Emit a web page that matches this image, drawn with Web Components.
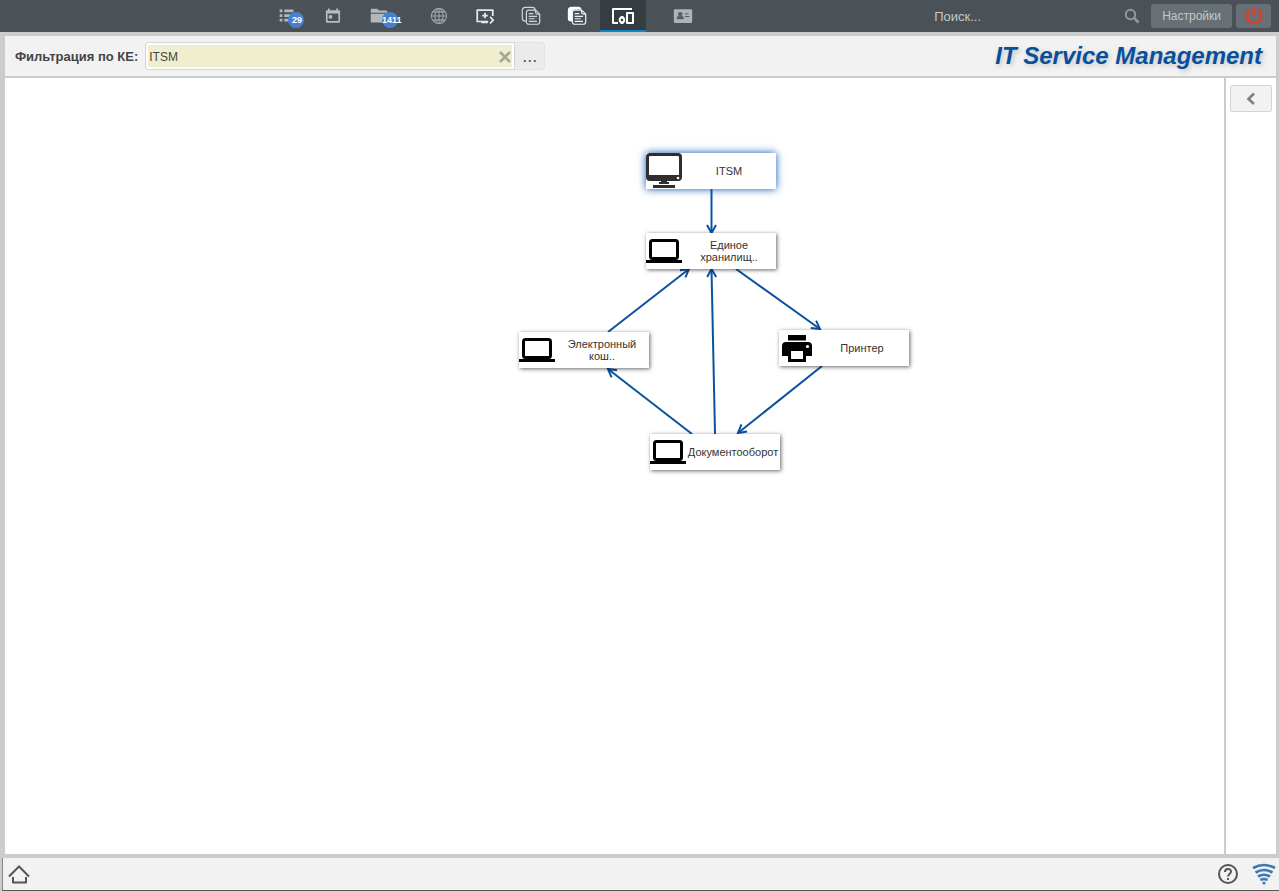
<!DOCTYPE html>
<html lang="ru">
<head>
<meta charset="utf-8">
<title>IT Service Management</title>
<style>
html, body { margin: 0; height: 100%; }
body { font: 13px/16px "Liberation Sans", Arial, sans-serif; color: #444; background: #ccc; }
</style>
</head>
<body>
<itsm-app></itsm-app>
<script>
const ICONS = {
  list: '<g fill="#b4b8ba"><path d="M4 5h3v3H4zM4 10h3v3H4zM4 15h3v3H4zM9 5h10v3H9zM9 10h10v3H9zM9 15h6v3H9z"/></g>',
  calendar: '<path fill="#b9bcbe" fill-rule="evenodd" d="M6 3h2v2h8V3h2v2h1a1.500 1.500 0 0 1 1.500 1.500v12a1.500 1.500 0 0 1-1.500 1.500H5a1.500 1.500 0 0 1-1.500-1.500v-12A1.500 1.500 0 0 1 5 5h1zM5.500 9v9h13V9zM7 11h4v4H7z"/>',
  folder: '<path fill="#b4b8ba" d="M4 4h6l2 2h8a1 1 0 0 1 1 1v1.500H3V5a1 1 0 0 1 1-1zM3 9.500h18V19H3z"/>',
  globe: '<g fill="none" stroke="#a5a9ab" stroke-width="1.100"><circle cx="12" cy="12" r="8.300"/><ellipse cx="12" cy="12" rx="4.500" ry="8.300"/><path d="M12 4v16M4 12h16M5.500 7.500h13M5.500 16.500h13"/></g>',
  monitor: '<path fill="none" stroke="#e8e9ea" stroke-width="1.900" stroke-linejoin="round" d="M20.500 12V5.500h-17v12.500h12M12 8.500v6M9 11.500h6M8 19h7M17.500 13l3.500 3.500-3.500 3.500"/>',
  docs: '<g fill="none" stroke="#d4d7d8" stroke-width="1.300"><path d="M7 17.500H5.500A3 3 0 0 1 2.500 14.500V6a3.500 3.500 0 0 1 3.500-3.500h7.500a3 3 0 0 1 3 3"/><path d="M9.500 5.500h7.500l4.500 4.500v8.500a2.500 2.500 0 0 1-2.500 2.500H9.500A2.500 2.500 0 0 1 7 18.500V8a2.500 2.500 0 0 1 2.500-2.500zM17 5.500v2.500a2 2 0 0 0 2 2h2.500M9.500 9.500h5M9.500 12.500h9M9.500 15h6.500M9.500 17.800h9"/></g>',
  docsfill: '<path fill="#fff" d="M6 2h7.500a3.500 3.500 0 0 1 3.500 3H9.500a3 3 0 0 0-3 3v10H5.500a3.500 3.500 0 0 1-3.500-3.500V6a4 4 0 0 1 4-4z"/><path fill="none" stroke="#f4f4f4" stroke-width="1.300" d="M9.500 5.500h7.500l4.500 4.500v8.500a2.500 2.500 0 0 1-2.500 2.500H9.500A2.500 2.500 0 0 1 7 18.500V8a2.500 2.500 0 0 1 2.500-2.500zM17 5.500v2.500a2 2 0 0 0 2 2h2.500M9.500 9.500h5M9.500 12.500h9M9.500 15h6.500M9.500 17.800h9"/>',
  devices: '<g fill="none" stroke="#fff" stroke-width="2" stroke-linejoin="round"><path d="M21 5H2v14h5"/><rect x="16" y="9" width="6" height="10"/><circle cx="11" cy="16" r="2.300"/></g><path fill="#fff" d="M9.500 12h3v2h-3zM9.500 18h3v2h-3z"/>',
  card: '<rect x="2" y="4.500" width="20" height="15" rx="1.200" fill="#b0b4b6"/><path fill="#596166" d="M9 7.500a2.500 2.500 0 0 1 1.700 4.300c1.300.8 2.300 1 2.300 3.700H5c0-2.700 1-2.900 2.300-3.700A2.500 2.500 0 0 1 9 7.500zM14 9h4v1.200h-4zM14 12h5v1.200h-5z"/>',
  search: '<g fill="none" stroke="#91979a"><circle cx="10.500" cy="10.500" r="4.700" stroke-width="2"/><path stroke-width="2.600" d="M14 14l4.500 4.500"/></g>',
  power: '<g fill="none" stroke="#d4422e" stroke-width="3"><path d="M8 6a7 7 0 1 0 8 0"/><path d="M12 3v9"/></g>',
  clear: '<path stroke="#a6a698" stroke-width="2.600" d="M7 7l10 10M17 7L7 17"/>',
  left: '<path fill="none" stroke="#808080" stroke-width="2.600" d="M15 6.500L9.500 12l5.500 5"/>',
  home: '<g fill="none" stroke="#555" stroke-width="2"><path d="M2 14.500L12 4.500l10 10"/><path d="M6 15v5.500h13V15" stroke-linejoin="round"/></g>',
  help: '<circle cx="12" cy="12" r="9" fill="none" stroke="#555" stroke-width="2"/><path fill="none" stroke="#555" stroke-width="2" d="M9 10c0-4 6-4 6-.5 0 2.300-3 2.500-3 5M12 16v2"/>',
  wifi: '<g fill="none" stroke="#3e78b0" stroke-width="2.700"><path d="M1 6q11-6 22 0M3.500 10.500q8.500-5 17 0M6 14.500q6-3.500 12 0M8.500 18q3.500-2 7 0"/></g><circle cx="12" cy="21" r="1.600" fill="#3e78b0"/>',
  desktop: '<rect x="1.500" y="1.500" width="33" height="25" rx="2.500" fill="#fff" stroke="#302d2f" stroke-width="3"/><path fill="#302d2f" d="M1 22h34v5H1zM15 27h6v2h2v2h-10v-2h2zM7 32h22v3H7z"/><circle cx="32" cy="25" r="1.300" fill="#fff"/>',
  laptop: '<rect x="4.500" y="7.500" width="27" height="18" rx="2" fill="none" stroke="#000" stroke-width="3"/><path d="M0 27h36v3H0z"/>',
  printer: '<path fill-rule="evenodd" d="M9 5h18v5.500H9zM7 12h22a4 4 0 0 1 4 4v10h-6v6H9v-6H3V16a4 4 0 0 1 4-4zM12 21v8h12v-8z"/><circle cx="28.500" cy="16.500" r="1.600" fill="#fff"/>'
};

function define(name, css, html) {
  customElements.define(name, class extends HTMLElement {
    constructor() {
      super();
      const t = document.createElement('template');
      t.innerHTML = `<style>*{box-sizing:border-box}${css}</style>${html}`;
      this.attachShadow({ mode: 'open' }).append(t.content.cloneNode(true));
    }
  });
}

class UiIcon extends HTMLElement {
  connectedCallback() {
    if (this.shadowRoot) return;
    const box = this.getAttribute('box') || 24;
    const size = this.getAttribute('size') || box;
    this.attachShadow({ mode: 'open' }).innerHTML =
      `<style>:host{display:block;flex:none}svg{display:block}</style>
       <svg width="${size}" height="${size}" viewBox="0 0 ${box} ${box}" aria-hidden="true">${ICONS[this.getAttribute('name')]}</svg>`;
  }
}
customElements.define('ui-icon', UiIcon);

class NavItem extends HTMLElement {
  connectedCallback() {
    if (this.shadowRoot) return;
    const badge = this.getAttribute('badge');
    this.attachShadow({ mode: 'open' }).innerHTML = `<style>
      :host{display:block;width:46px;height:32px}
      a{display:flex;box-sizing:border-box;width:100%;height:100%;align-items:center;justify-content:center;position:relative}
      :host([active]) a{background:#353d42;border-bottom:2px solid #1584ca;padding-top:2px}
      .badge{position:absolute;left:24px;top:12px;width:18px;height:16px;color:#fff;font:bold 9px/16px "Liberation Sans",sans-serif}
      .badge::before{content:"";position:absolute;left:0;top:0;width:16px;height:16px;border-radius:50%;background:#4a7fd0}
      .badge span{position:relative;display:block;text-align:center}
      .badge.long{left:26px;width:20px}
      .long span{text-align:left}
      </style><a href="#" aria-label="${this.getAttribute('label')}"><ui-icon name="${this.getAttribute('icon')}" size="${this.getAttribute('size') || 22}"></ui-icon>${
      badge ? `<span class="badge ${badge.length > 2 ? 'long' : ''}"><span>${badge}</span></span>` : ''}</a>`;
  }
}
customElements.define('nav-item', NavItem);

define('top-bar', `
  :host{display:flex;height:32px;background:#4a5257;align-items:center;padding-right:8px}
  nav{display:flex;gap:14px;margin-left:264px}
  nav div{display:flex}
  form{display:flex;align-items:center;margin-left:auto;width:220px;margin-right:7px}
  input{flex:1;min-width:0;border:0;background:none;color:#c4c8ca;font:13px/16px "Liberation Sans",sans-serif;padding:1px 10px 0;outline:0}
  input::placeholder{color:#c4c8ca;opacity:1}
  .buttons{display:flex;gap:4px}
  button{height:24px;border:0;border-radius:3px;background:#667075;color:#c4c8ca;font:12px/16px "Liberation Sans",sans-serif;padding:0 11px;display:flex;align-items:center;justify-content:center}
  form button{width:24px;background:none;padding:0}
  .power{width:35px;padding:0}`,
  `<nav>
    <div><nav-item icon="list" label="Задачи" badge="29"></nav-item><nav-item icon="calendar" label="Календарь" size="20"></nav-item><nav-item icon="folder" label="Папки" badge="1411"></nav-item></div>
    <div><nav-item icon="globe" label="Сеть"></nav-item><nav-item icon="monitor" label="Добавить"></nav-item><nav-item icon="docs" label="Документы"></nav-item><nav-item icon="docsfill" label="Копии"></nav-item><nav-item icon="devices" label="Устройства" size="24" active></nav-item></div>
    <div><nav-item icon="card" label="Контакты"></nav-item></div>
  </nav>
  <form><input type="search" placeholder="Поиск..." aria-label="Поиск"><button type="button" aria-label="Найти"><ui-icon name="search"></ui-icon></button></form>
  <div class="buttons"><button>Настройки</button><button class="power" aria-label="Выход"><ui-icon name="power"></ui-icon></button></div>`);

define('filter-bar', `
  :host{display:flex;height:40px;align-items:center;background:#f2f2f2;padding:0 14px 0 10px}
  label{font-weight:bold;margin-right:7px;padding-top:2px}
  .field{display:flex;width:370px;height:28px;border:1px solid #d4d4d4;border-radius:3px 0 0 3px;background:#fff;padding:2px;position:relative}
  input{width:100%;border:0;background:#efefd0;color:#444;font:12px/16px "Liberation Sans",sans-serif;padding:2px 20px 0 1px;outline:0}
  button{border:0;padding:0;background:none}
  .clear{position:absolute;right:-3px;top:2px}
  .more{width:30px;height:28px;background:#ebebeb;border:1px solid #e2e2e2;border-left:0;border-radius:0 3px 3px 0;color:#555;font:18px/20px "Liberation Sans",sans-serif}
  h1{margin:0 0 0 auto;font:italic bold 24px/28px "Liberation Sans",sans-serif;color:#08509b;text-shadow:2px 2px 5px #c4c4c4}`,
  `<label for="ke">Фильтрация по КЕ:</label>
  <div class="field"><input id="ke" type="text" value="ITSM"><button class="clear" aria-label="Очистить"><ui-icon name="clear"></ui-icon></button></div>
  <button class="more" aria-label="Выбрать">...</button>
  <h1>IT Service Management</h1>`);

define('graph-node', `
  :host{position:absolute;display:flex;align-items:center;width:130px;height:36px;background:#fff;box-shadow:1px 1px 4px rgba(0,0,0,.6);font-size:11px;line-height:12px;color:#333}
  :host([selected]){box-shadow:0 0 8px #0a56b0}
  .label{flex:1;min-width:0;display:flex;justify-content:center;text-align:center}`,
  `<slot name="icon"></slot><div class="label"><div><slot></slot></div></div>`);

define('graph-canvas', `
  :host{display:block;position:relative;background:#fff;overflow:hidden}
  svg{position:absolute;left:0;top:0}
  #a{left:641px;top:75px}#b{left:641px;top:155px}#c{left:514px;top:254px}#d{left:774px;top:252px}#e{left:645px;top:356px}`,
  `<svg width="920" height="420" fill="none" stroke="#0a52a0" stroke-width="2">
    <defs><marker id="tip" markerUnits="userSpaceOnUse" markerWidth="12" markerHeight="12" refX="10" refY="6" orient="auto"><path d="M2 1.500l8 4.500-8 4.500"/></marker></defs>
    <g marker-end="url(#tip)">
    <path d="M706.500 111V155"/><path d="M603 254L684 191"/><path d="M731 191L815 251"/><path d="M710 356L706.500 191"/><path d="M817 288L733 355"/><path d="M687 356L603 291"/></g>
  </svg>
  <graph-node id="a" selected><ui-icon slot="icon" name="desktop" box="36"></ui-icon>ITSM</graph-node>
  <graph-node id="b"><ui-icon slot="icon" name="laptop" box="36"></ui-icon>Единое<br>хранилищ..</graph-node>
  <graph-node id="c"><ui-icon slot="icon" name="laptop" box="36"></ui-icon>Электронный<br>кош..</graph-node>
  <graph-node id="d"><ui-icon slot="icon" name="printer" box="36"></ui-icon>Принтер</graph-node>
  <graph-node id="e"><ui-icon slot="icon" name="laptop" box="36"></ui-icon>Документооборот</graph-node>`);

define('side-panel', `
  :host{display:block;background:#fff;padding:7px 4px}
  button{display:flex;align-items:center;justify-content:center;width:100%;height:27px;padding:0;background:#f2f2f2;border:1px solid #d4d4d4;border-radius:2px}`,
  `<button aria-label="Развернуть панель"><ui-icon name="left"></ui-icon></button>`);

define('status-bar', `
  :host{display:flex;height:33px;align-items:center;justify-content:space-between;background:#f2f2f2;border-left:1px solid #888;border-bottom:1px solid #555;margin-left:2px;padding:0 3px 0 4px}
  div{display:flex;gap:12px}
  button{border:0;background:none;padding:0;display:block}`,
  `<button aria-label="Домой"><ui-icon name="home"></ui-icon></button>
  <div><button aria-label="Справка"><ui-icon name="help"></ui-icon></button><button aria-label="Связь"><ui-icon name="wifi"></ui-icon></button></div>`);

define('itsm-app', `
  :host{display:flex;flex-direction:column;min-height:100vh}
  main{flex:1;display:flex;flex-direction:column;gap:2px;background:#ccc;padding:4px 3px 4px 5px}
  .work{flex:1;display:grid;grid-template-columns:1fr 50px;gap:2px}`,
  `<top-bar></top-bar><main><filter-bar></filter-bar><div class="work"><graph-canvas></graph-canvas><side-panel></side-panel></div></main><status-bar></status-bar>`);
</script>
</body>
</html>
